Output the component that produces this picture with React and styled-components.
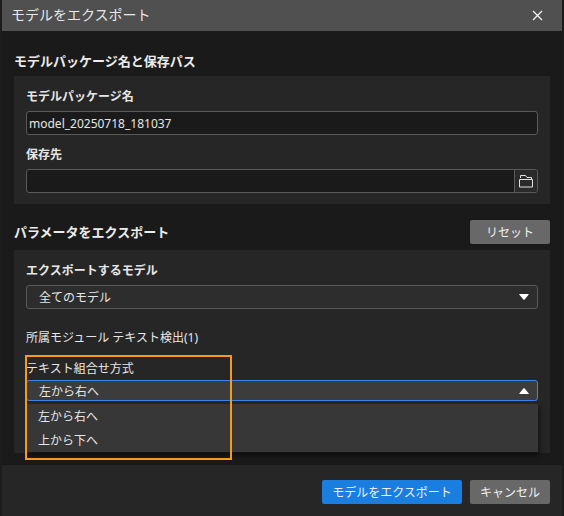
import React from "react";
import styled, { createGlobalStyle } from "styled-components";

const GlobalStyle = createGlobalStyle`
  html, body {
    margin: 0;
    padding: 0;
    width: 564px;
    height: 516px;
    overflow: hidden;
    background: #1c1c1c;
  }
  body {
    font-family: "Noto Sans", "Noto Sans CJK JP", sans-serif;
    font-size: 12px;
    color: #e6e6e6;
  }
`;

const Dialog = styled.div`
  position: relative;
  box-sizing: border-box;
  width: 560px;
  height: 516px;
  margin-left: 2px;
  display: flex;
  flex-direction: column;
  background: #1a1a1a;
`;

const TitleBar = styled.header`
  flex: none;
  height: 31px;
  padding: 0 19px 0 9px;
  display: flex;
  align-items: center;
  justify-content: space-between;
  background: #505050;
  font-size: 14px;
  color: #e8e8e8;
`;

const TitleText = styled.span`
  line-height: 18px;
  padding-bottom: 1px;
`;

const CloseButton = styled.button`
  width: 11px;
  height: 11px;
  padding: 0;
  border: 0;
  background: none;
  display: flex;
  color: #f2f2f2;
`;

const Body = styled.main`
  flex: 1;
  padding: 20px 12px 12px;
  display: flex;
  flex-direction: column;
`;

const SectionHead = styled.div`
  flex: none;
  height: ${(p) => p.$height}px;
  margin-top: ${(p) => p.$top || 0}px;
  display: flex;
  align-items: flex-start;
  justify-content: space-between;
`;

const SectionTitle = styled.h2`
  margin: ${(p) => p.$top || 0}px 0 0;
  font-size: 13px;
  line-height: 20px;
  font-weight: 700;
  color: #ececec;
`;

const Panel = styled.section`
  flex: none;
  box-sizing: border-box;
  height: ${(p) => p.$height}px;
  padding: 10px 12px;
  background: #262626;
`;

const Label = styled.div`
  height: 20px;
  margin-top: ${(p) => p.$top || 0}px;
  margin-bottom: ${(p) => p.$bottom ?? 5}px;
  line-height: 22px;
  font-weight: ${(p) => (p.$plain ? 400 : 700)};
  color: #e6e6e6;
`;

const Field = styled.div`
  box-sizing: border-box;
  height: 24px;
  display: flex;
  align-items: center;
  border: 1px solid #5a5a5a;
  border-radius: 3px;
  background: #1a1a1a;
  color: #e6e6e6;
`;

const FieldText = styled.span`
  flex: 1;
  padding-left: 2px;
`;

const FolderButton = styled.button`
  box-sizing: border-box;
  width: 23px;
  height: 22px;
  padding: 0;
  display: flex;
  align-items: center;
  justify-content: center;
  border: 0;
  border-left: 1px solid #5a5a5a;
  border-radius: 0 3px 3px 0;
  background: #2a2a2a;
  color: #e0e0e0;
`;

const Select = styled.div`
  position: relative;
  box-sizing: border-box;
  height: ${(p) => (p.$open ? 21 : 24)}px;
  padding: 0 8px 0 12px;
  display: flex;
  align-items: center;
  justify-content: space-between;
  border: 1px solid ${(p) => (p.$open ? "#3d84f0" : "#5a5a5a")};
  border-radius: 3px;
  background: ${(p) => (p.$open ? "#3c3c3c" : "#2d2d2d")};
  color: #e6e6e6;
`;

const Arrow = styled.svg`
  width: 10px;
  height: 6px;
  fill: #ffffff;
  transform: ${(p) => (p.$up ? "rotate(180deg)" : "none")};
`;

const Menu = styled.ul`
  position: absolute;
  top: 23px;
  left: 0;
  right: -1px;
  height: 48px;
  margin: 0;
  padding: 0;
  list-style: none;
  background: #373737;
  box-shadow: 2px 3px 5px rgba(0, 0, 0, 0.55);
`;

const MenuItem = styled.li`
  height: 24px;
  padding-left: 11px;
  line-height: 26px;
  color: #e6e6e6;
`;

const Highlight = styled.div`
  position: absolute;
  left: 23px;
  top: 355px;
  width: 203px;
  height: 101px;
  border: 2px solid #f59a1e;
  pointer-events: none;
`;

const Footer = styled.footer`
  flex: none;
  height: 51px;
  padding: 15px 12px 0 0;
  box-sizing: border-box;
  display: flex;
  justify-content: flex-end;
  gap: 8px;
  background: #262626;
`;

const Button = styled.button`
  box-sizing: border-box;
  width: ${(p) => p.$width}px;
  height: 24px;
  padding: 0;
  border: 0;
  border-radius: 2px;
  background: ${(p) => (p.$primary ? "#1a7de0" : "#686868")};
  color: #f0f0f0;
  font-family: inherit;
  font-size: 12px;
`;

const CloseIcon = () => (
  <svg viewBox="0 0 11 11" width="11" height="11" fill="none" stroke="currentColor" strokeWidth="1.3">
    <path d="M1 1l9 9M10 1l-9 9" />
  </svg>
);

const FolderIcon = () => (
  <svg viewBox="0 0 14 14" width="14" height="14" fill="none" stroke="currentColor" strokeWidth="1">
    <path d="M1.5 4V1.5h5l1.5 2h4.5V5" />
    <path d="M.5 5.5h13v7.5H.5z" />
  </svg>
);

const CaretIcon = ({ up }) => (
  <Arrow viewBox="0 0 10 6" $up={up}>
    <path d="M0 0.8Q0 0 1 0h8q1 0 .6.8L5.6 5.6q-.6.6-1.2 0L.4.8z" />
  </Arrow>
);

export default function App() {
  return (
    <>
      <GlobalStyle />
      <Dialog>
        <TitleBar>
          <TitleText>モデルをエクスポート</TitleText>
          <CloseButton aria-label="閉じる">
            <CloseIcon />
          </CloseButton>
        </TitleBar>
        <Body>
          <SectionHead $height={25}>
            <SectionTitle>モデルパッケージ名と保存パス</SectionTitle>
          </SectionHead>
          <Panel $height={128}>
            <Label>モデルパッケージ名</Label>
            <Field>
              <FieldText>model_20250718_181037</FieldText>
            </Field>
            <Label $top={9}>保存先</Label>
            <Field>
              <FieldText />
              <FolderButton aria-label="参照">
                <FolderIcon />
              </FolderButton>
            </Field>
          </Panel>
          <SectionHead $height={30} $top={16}>
            <SectionTitle $top={2}>パラメータをエクスポート</SectionTitle>
            <Button $width={80}>リセット</Button>
          </SectionHead>
          <Panel $height={203}>
            <Label>エクスポートするモデル</Label>
            <Select>
              全てのモデル
              <CaretIcon />
            </Select>
            <Label $plain $top={18} $bottom={11}>所属モジュール テキスト検出(1)</Label>
            <Label $plain $bottom={2}>テキスト組合せ方式</Label>
            <Select $open>
              左から右へ
              <CaretIcon up />
              <Menu>
                <MenuItem>左から右へ</MenuItem>
                <MenuItem>上から下へ</MenuItem>
              </Menu>
            </Select>
          </Panel>
        </Body>
        <Footer>
          <Button $primary $width={140}>モデルをエクスポート</Button>
          <Button $width={80}>キャンセル</Button>
        </Footer>
        <Highlight />
      </Dialog>
    </>
  );
}
